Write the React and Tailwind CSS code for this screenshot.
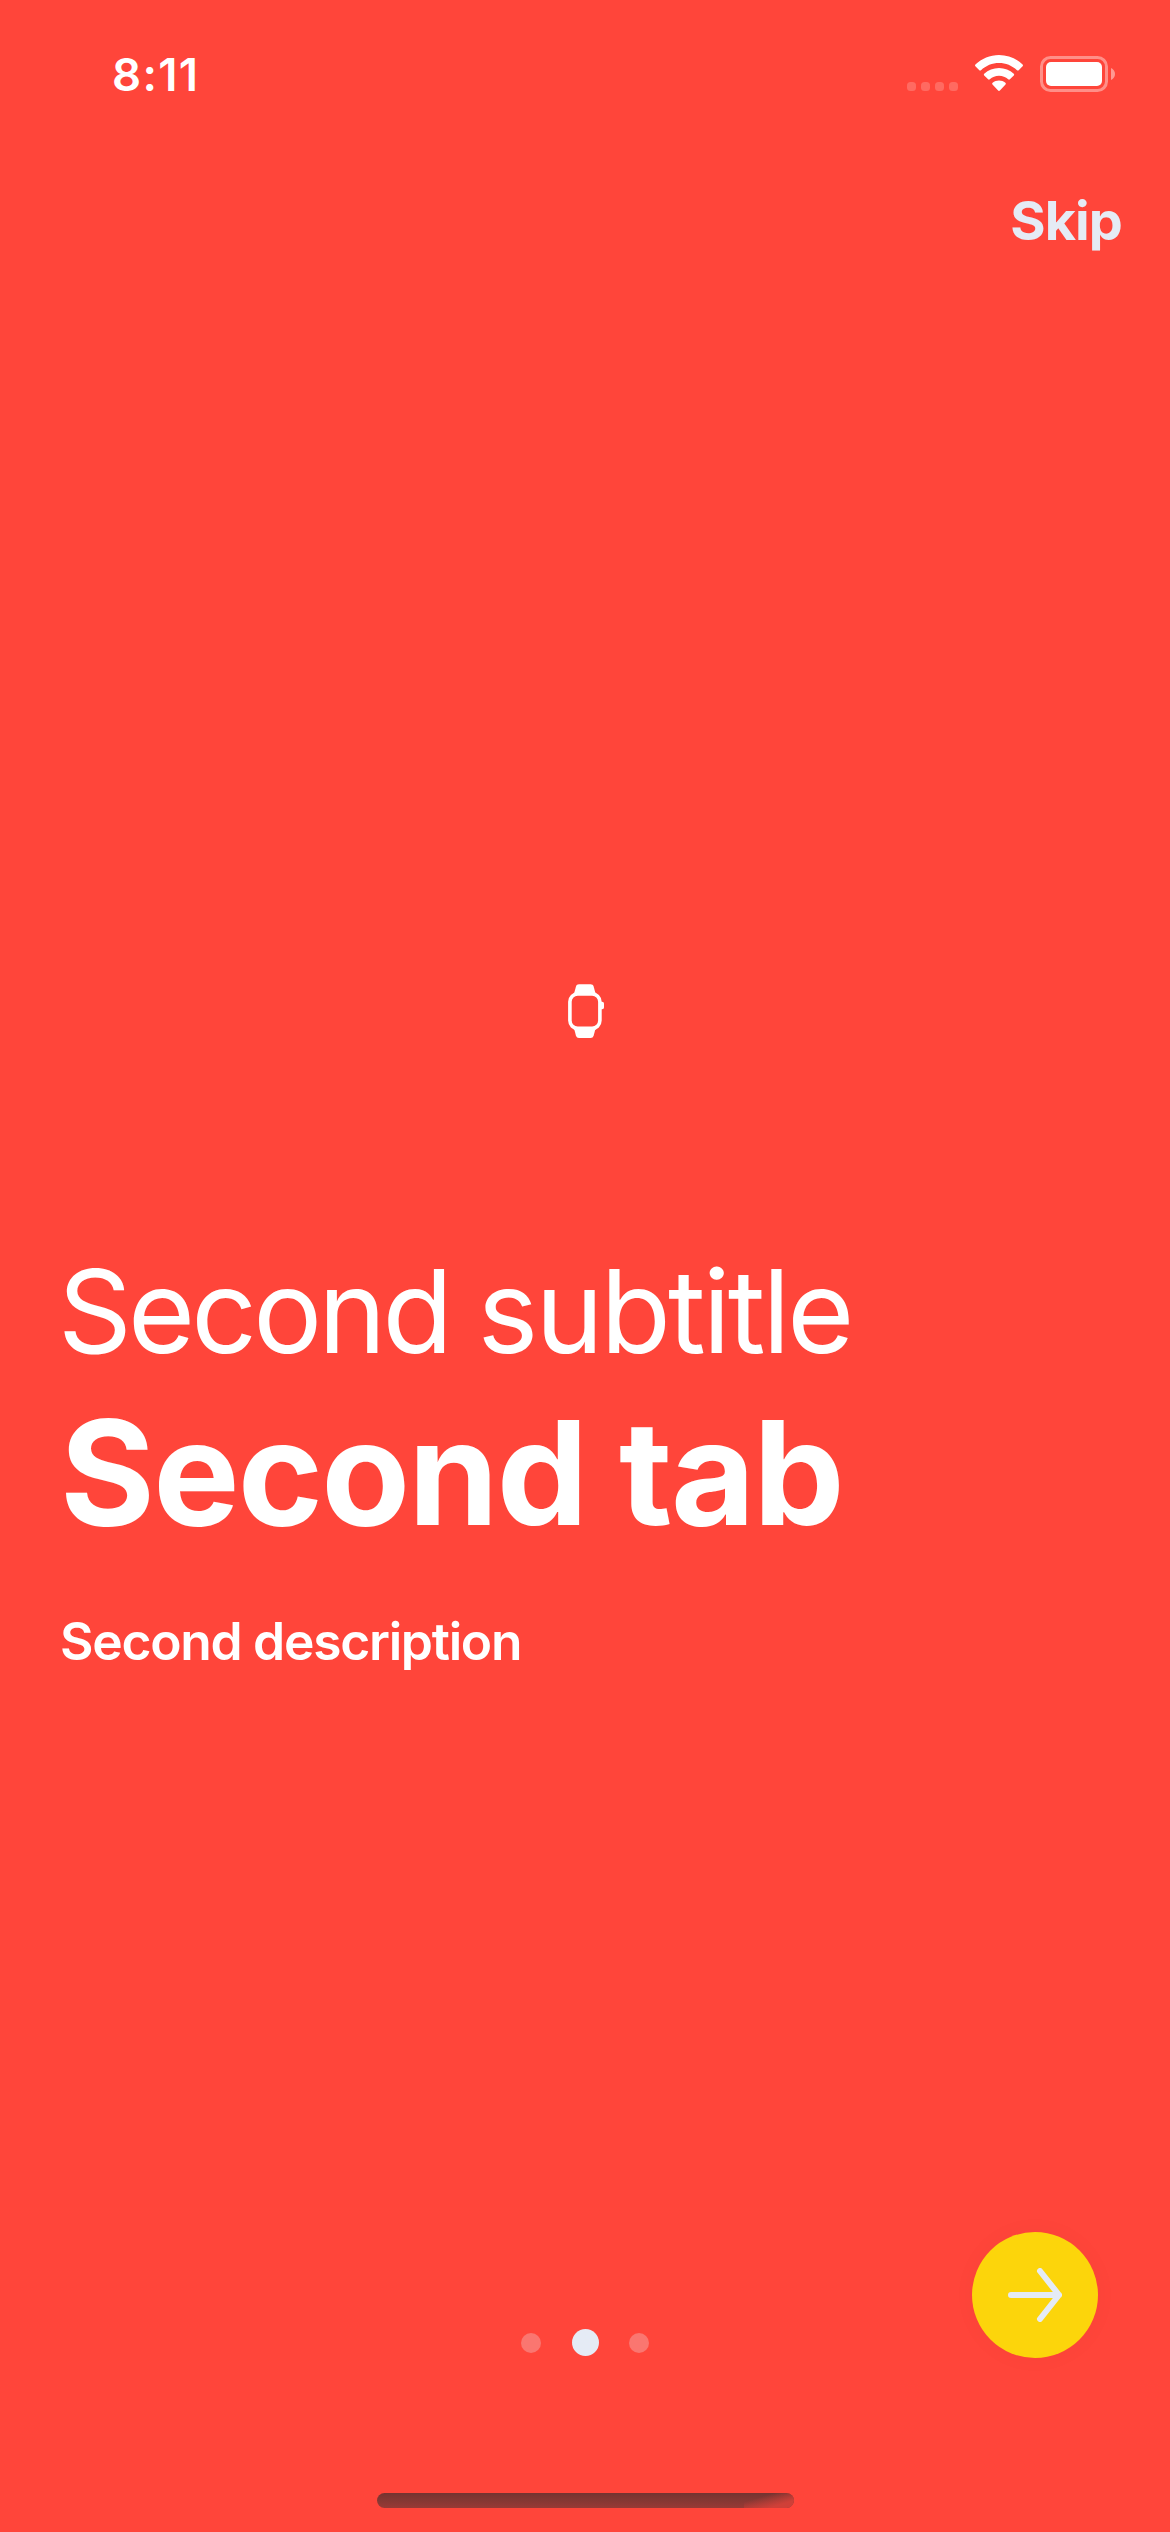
function CellularDots() {
  return (
    <div className="mb-[-25px] flex gap-[5px]">
      {[0, 1, 2, 3].map((i) => (
        <span key={i} className="size-[9px] rounded-[3.5px] bg-white/20" />
      ))}
    </div>
  );
}

function Wifi() {
  return (
    <svg className="ml-[17px] h-9 w-12 -translate-y-px" viewBox="0 0 48 36" fill="white">
      <path d="M24 0C33 0 41.3 3.500 47.600 9.600C48.100 10.100 48.100 10.800 47.600 11.300L43.700 15.200C43.200 15.700 42.500 15.700 42 15.200C37.100 10.600 30.800 8 24 8C17.200 8 10.900 10.600 6 15.200C5.500 15.700 4.800 15.700 4.300 15.200L0.400 11.300C-0.100 10.800 -0.100 10.100 0.400 9.600C6.700 3.500 15 0 24 0Z" />
      <path d="M24 12.900C29.600 12.900 34.800 15 38.800 18.700C39.300 19.200 39.300 19.900 38.800 20.400L34.900 24.300C34.400 24.800 33.700 24.800 33.200 24.300C30.700 22 27.500 20.800 24 20.800C20.500 20.800 17.300 22 14.800 24.300C14.300 24.800 13.600 24.800 13.100 24.300L9.200 20.400C8.700 19.900 8.700 19.200 9.200 18.700C13.200 15 18.400 12.900 24 12.900Z" />
      <path d="M24 25.600C26.400 25.600 28.600 26.400 30.400 27.800C31 28.300 31 29 30.500 29.500L24.900 35.500C24.400 36 23.600 36 23.100 35.500L17.500 29.500C17 29 17 28.300 17.600 27.800C19.400 26.400 21.600 25.600 24 25.600Z" />
    </svg>
  );
}

function Battery() {
  return (
    <div className="ml-[17px] flex items-center">
      <div className="h-9 w-[68px] rounded-[10.500px] border-[3px] border-white/40 p-[3px]">
        <div className="h-full w-full rounded-[5px] bg-white" />
      </div>
      <svg className="ml-[3px] h-3 w-1" viewBox="0 0 4 12" fill="white" fillOpacity="0.45">
        <path d="M0 0C2.500 1 4 3.400 4 6C4 8.600 2.500 11 0 12Z" />
      </svg>
    </div>
  );
}

function Watch() {
  return (
    <svg className="h-[54px] w-[34px] overflow-visible" viewBox="0 0 34 54" fill="white">
      <path d="M6.200 9L7.900 2.700C8.400 1 9.500 0.300 11 0.300H22.600C24.100 0.300 25.200 1 25.700 2.700L27.400 9Z" />
      <path d="M6.200 45L7.900 51.500C8.400 53.200 9.500 54 11 54H22.600C24.100 54 25.200 53.200 25.700 51.500L27.400 45Z" />
      <rect x="1.900" y="9.900" width="30" height="34.500" rx="7.800" fill="none" stroke="white" strokeWidth="3.600" />
      <path d="M33 17.700H34C35.300 17.700 36 18.500 36 19.700V23.300C36 24.500 35.300 25.300 34 25.300H33Z" />
    </svg>
  );
}

export default function App() {
  return (
    <div className="flex h-[2532px] w-[1170px] flex-col overflow-hidden bg-[#ff453a] font-['Inter',sans-serif] text-white">
      <header className="flex h-[148px] items-center pr-[55px] pl-28">
        <span className="flex-1 pt-px text-[45.500px] leading-none font-semibold tracking-[1.300px]">8:11</span>
        <CellularDots />
        <Wifi />
        <Battery />
      </header>

      <div className="flex h-36 items-center justify-end pr-12">
        <button className="pt-[2px] text-[54px] leading-none font-bold tracking-[-0.900px] text-[#e5ebf5]">Skip</button>
      </div>

      <main className="flex flex-1 flex-col">
        <div className="flex h-[950px] items-end justify-center pb-[204px]">
          <Watch />
        </div>
        <div className="pl-[60px]">
          <p className="-ml-[2px] text-[115px] leading-[140px] tracking-[-2.900px]">
            <span className="tracking-[-3.800px]">Second </span>subtitle
          </p>
          <h1 className="mt-[5px] text-[145px] leading-[172px] font-bold tracking-[-1.800px]">Second tab</h1>
          <p className="mt-[51px] text-[51.500px] leading-[62px] font-semibold tracking-[-1.260px]">Second description</p>
        </div>
      </main>

      <footer className="grid h-[300px] grid-cols-3 items-start">
        <div />
        <div className="mt-[97px] flex items-center justify-center gap-[30.500px]">
          <span className="size-5 rounded-full bg-[#fa7670]" />
          <span className="size-[27px] rounded-full bg-[#e5ebf5]" />
          <span className="size-5 rounded-full bg-[#fa7670]" />
        </div>
        <button className="mr-[72.500px] flex size-[125.500px] items-center justify-center justify-self-end rounded-full bg-[#fcd50b] shadow-[0_0_24px_rgba(0,0,0,0.03)]">
          <svg className="h-[54px] w-[54px]" viewBox="0 0 54 54" fill="none" stroke="#e5ebf5" strokeWidth="6" strokeLinecap="round" strokeLinejoin="round">
            <path d="M3 27H51M32 3L51 27L32 51" />
          </svg>
        </button>
        <div className="col-span-3 mx-auto mb-6 h-[15px] w-[417px] self-end rounded-full bg-linear-to-b from-[#743431] to-[#983a35]">
          <div className="ml-auto h-full w-[50px] rounded-r-full bg-linear-to-br from-transparent from-30% to-[#cf4038] to-75%" />
        </div>
      </footer>
    </div>
  );
}
